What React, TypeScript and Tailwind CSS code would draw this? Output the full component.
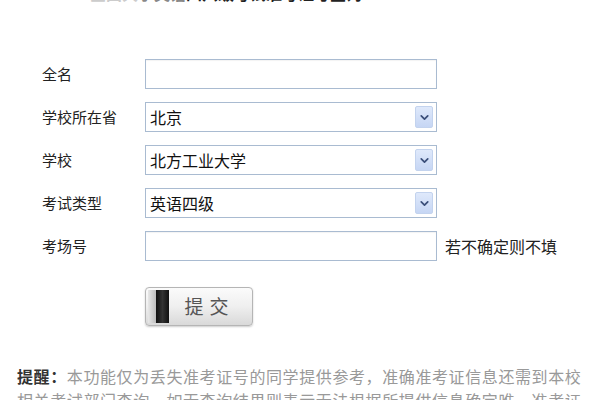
import { ChevronDown } from 'lucide-react';

const font = { fontFamily: '"Noto Sans CJK SC", "Noto Sans", sans-serif' };

const Label = ({ text }: { text: string }) => (
  <span className="w-[103px] shrink-0 text-[15px] leading-[30px] text-[#222]">{text}</span>
);

const TextBox = () => (
  <div className="h-[30px] w-[292px] border border-[#a9bbd1] bg-white shadow-[inset_0_1px_1px_rgba(0,0,0,0.05)]" />
);

const SelectBox = ({ value }: { value: string }) => (
  <div className="flex h-[30px] w-[292px] items-center border border-[#a9bbd1] bg-white pl-[4px] pr-[3px]">
    <span className="flex-1 text-[16px] text-[#111]">{value}</span>
    <span className="flex h-[22px] w-[18px] items-center justify-center rounded-[2px] border border-[#c3d3ee] bg-gradient-to-b from-[#dfe9fb] to-[#c6d6f4]">
      <ChevronDown size={13} strokeWidth={3.2} className="text-[#3b4f7a]" />
    </span>
  </div>
);

export default function App() {
  return (
    <div className="h-[400px] w-[600px] overflow-hidden bg-white" style={font}>
      <div className="-mt-[16px] h-[16px] pl-[90px] text-[16px] font-bold leading-[18px] text-[#222]">
        <span className="text-[#ccc]">全国大</span>
        <span className="text-[#888]">学英语</span>四六级考试准考证号查询
      </div>

      <div className="mt-[59px] flex flex-col gap-[13px] pl-[42px]">
        <div className="flex items-center">
          <Label text="全名" />
          <TextBox />
        </div>
        <div className="flex items-center">
          <Label text="学校所在省" />
          <SelectBox value="北京" />
        </div>
        <div className="flex items-center">
          <Label text="学校" />
          <SelectBox value="北方工业大学" />
        </div>
        <div className="flex items-center">
          <Label text="考试类型" />
          <SelectBox value="英语四级" />
        </div>
        <div className="flex items-center">
          <Label text="考场号" />
          <TextBox />
          <span className="ml-[8px] text-[16px] text-[#222]">若不确定则不填</span>
        </div>
      </div>

      <div className="mt-[26px] pl-[145px]">
        <button className="flex h-[39px] w-[108px] items-stretch overflow-hidden rounded-[4px] border border-[#b5b5b5] bg-gradient-to-b from-[#fbfbfb] via-[#efefef] to-[#d9d9d9] p-[2px] shadow-[0_1px_2px_rgba(0,0,0,0.2)]">
          <span className="w-[8px] bg-gradient-to-r from-[#e8e8e8] to-[#bdbdbd]" />
          <span className="w-[13px] bg-gradient-to-r from-[#111] via-[#333] to-[#111]" />
          <span className="flex flex-1 items-center justify-center text-[19px] tracking-[6px] text-[#555]">
            提交
          </span>
        </button>
      </div>

      <div className="mt-[38px] w-[592px] pl-[17px] text-[16px] leading-[24px] tracking-[0.6px] text-[#999]">
        <span className="font-bold text-[#333]">提醒：</span>
        本功能仅为丢失准考证号的同学提供参考，准确准考证信息还需到本校相关考试部门查询，如无查询结果则表示无法根据所提供信息确定唯一准考证号。
      </div>
    </div>
  );
}
